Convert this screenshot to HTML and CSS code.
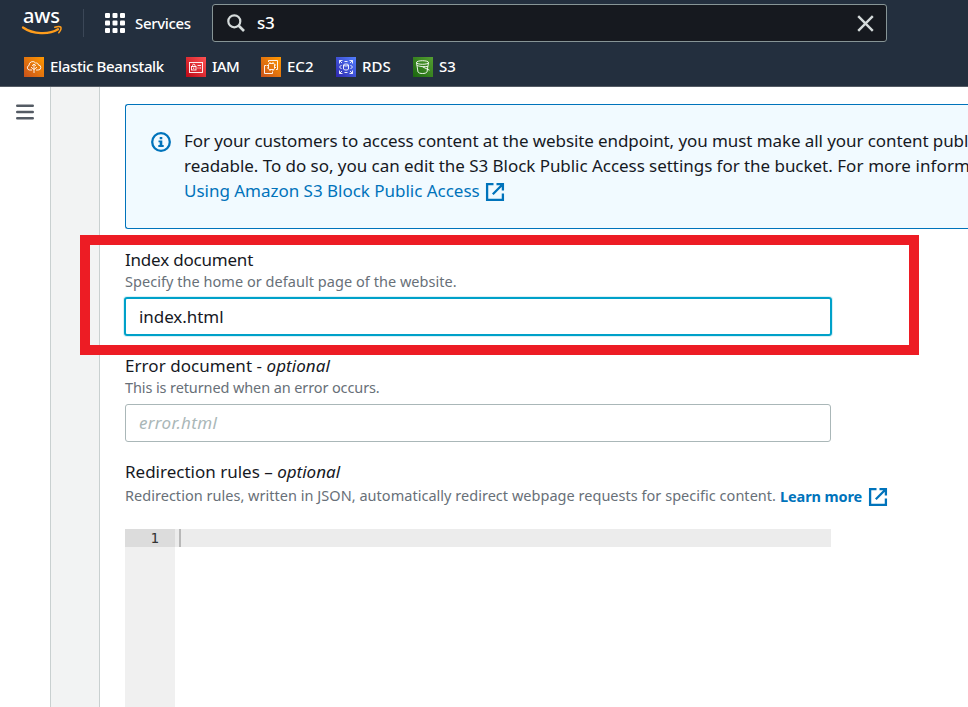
FILE: index.html
```html
<!DOCTYPE html>
<html lang="en">
<head>
<meta charset="utf-8">
<title>Edit static website hosting</title>
<link rel="stylesheet" href="styles.css">
</head>
<body>
<header class="nav">
  <div class="nav-top">
    <svg class="logo" width="40" height="28" viewBox="0 0 40 28">
      <text class="logo-text" x="1" y="14" textLength="37">aws</text>
      <path d="M1 18.500C11 25.500 27 26 36 20.300" fill="none" stroke="#ff9d1c" stroke-width="2.300" stroke-linecap="round"/>
      <path d="M32.800 18.200C35 17.500 38 17.300 38.800 18.100 39.300 19.100 38.300 22 36.800 23.800" fill="none" stroke="#ff9d1c" stroke-width="1.500" stroke-linecap="round"/>
    </svg>
    <span class="nav-divider"></span>
    <div class="services">
      <svg width="20" height="20" viewBox="0 0 20 20" fill="#fff"><rect width="5" height="5" rx="1"/><rect x="7.500" width="5" height="5" rx="1"/><rect x="15" width="5" height="5" rx="1"/><rect y="7.500" width="5" height="5" rx="1"/><rect x="7.500" y="7.500" width="5" height="5" rx="1"/><rect x="15" y="7.500" width="5" height="5" rx="1"/><rect y="15" width="5" height="5" rx="1"/><rect x="7.500" y="15" width="5" height="5" rx="1"/><rect x="15" y="15" width="5" height="5" rx="1"/></svg>
      <span class="services-label">Services</span>
    </div>
    <div class="search">
      <svg width="18" height="18" viewBox="0 0 18 18" fill="none" stroke="#d5dbdb" stroke-width="2.200"><circle cx="7.300" cy="7.300" r="6"/><path d="M11.500 11.500L17 17" stroke-width="2.600"/></svg>
      <span class="query">s3</span>
      <svg width="17" height="17" viewBox="0 0 17 17" fill="none" stroke="#d5dbdb" stroke-width="2.400"><path d="M1.200 1.200L15.800 15.800M15.800 1.200L1.200 15.800"/></svg>
    </div>
  </div>
  <div class="favorites">
    <a class="fav fav-eb"><svg width="20" height="20" viewBox="0 0 20 20"><defs><linearGradient id="o" x1="0" y1="1" x2="1" y2="0"><stop offset="0" stop-color="#c8511b"/><stop offset="1" stop-color="#ff9900"/></linearGradient></defs><rect width="20" height="20" fill="url(#o)"/><g fill="none" stroke="#fff" stroke-width="0.900"><path d="M8 13H5.500A2.300 2.300 0 0 1 5 8.500 3.700 3.700 0 0 1 11.700 6.100 2 2 0 0 1 14.400 8 2.500 2.500 0 0 1 14.200 13H12"/><path d="M10 7.500V16M7 10.200L10 12.500 13 10.200M8 8.800L10 7 12 8.800"/></g></svg><span>Elastic Beanstalk</span></a>
    <a class="fav fav-iam"><svg width="20" height="20" viewBox="0 0 20 20"><defs><linearGradient id="r" x1="0" y1="1" x2="1" y2="0"><stop offset="0" stop-color="#bd0816"/><stop offset="1" stop-color="#ff5252"/></linearGradient></defs><rect width="20" height="20" fill="url(#r)"/><g fill="none" stroke="#fff" stroke-width="0.900"><rect x="3.500" y="5.500" width="13" height="10"/><rect x="5.500" y="9.500" width="4.500" height="3.500"/><path d="M6.500 9.500V8.500A1.200 1.200 0 0 1 9 8.500V9.500M7.700 10.500V12M11.500 8.500H15M11.500 11H12.500M13.500 11H15"/></g></svg><span>IAM</span></a>
    <a class="fav fav-ec2"><svg width="20" height="20" viewBox="0 0 20 20"><rect width="20" height="20" fill="url(#o)"/><g fill="none" stroke="#fff" stroke-width="0.900"><rect x="7.500" y="6.500" width="6" height="6" rx="1"/><path d="M7.500 5V3.500H16.500V12.500H15M5.500 8.500H3.500V16.500H11.500V14.500"/><path d="M9 5V6.500M12 5V6.500M9 12.500V14M12 12.500V14M6 8.500H7.500M6 11H7.500M13.500 8H15M13.500 10.500H15"/></g></svg><span>EC2</span></a>
    <a class="fav fav-rds"><svg width="20" height="20" viewBox="0 0 20 20"><defs><linearGradient id="b" x1="0" y1="1" x2="1" y2="0"><stop offset="0" stop-color="#2e27ad"/><stop offset="1" stop-color="#527fff"/></linearGradient></defs><rect width="20" height="20" fill="url(#b)"/><g fill="none" stroke="#fff" stroke-width="0.900"><ellipse cx="10" cy="8" rx="2.500" ry="1"/><path d="M7.500 8V12C7.500 13.400 12.500 13.400 12.500 12V8"/><path d="M3.500 6.500V3.500H6.500M3.500 3.500L6 6M13.500 3.500H16.500V6.500M16.500 3.500L14 6M3.500 13.500V16.500H6.500M3.500 16.500L6 14M13.500 16.500H16.500V13.500M16.500 16.500L14 14M5.500 8L3.500 10 5.500 12M14.500 8L16.500 10 14.500 12M8.500 4.500H11.500M8.500 15.500H11.500"/></g></svg><span>RDS</span></a>
    <a class="fav fav-s3"><svg width="20" height="20" viewBox="0 0 20 20"><defs><linearGradient id="g" x1="0" y1="1" x2="1" y2="0"><stop offset="0" stop-color="#1b660f"/><stop offset="1" stop-color="#55a032"/></linearGradient></defs><rect width="20" height="20" fill="url(#g)"/><g fill="none" stroke="#fff" stroke-width="0.900"><ellipse cx="9.500" cy="5.500" rx="6" ry="1.800"/><path d="M3.500 5.500L5 15C6 17 13 17 14 15L15.500 5.500M3.800 8.200C6 9.500 9 9.700 14.800 9.500M9.500 9.800L16.500 13.200"/></g></svg><span>S3</span></a>
  </div>
</header>
<div class="page">
  <aside class="rail"><svg width="18" height="16" viewBox="0 0 18 16" stroke="#545b64" stroke-width="2.400" stroke-linecap="round"><path d="M1.200 1.800H16.800M1.200 8H16.800M1.200 14.200H16.800"/></svg></aside>
  <div class="gutter"></div>
  <main class="panel">
    <section class="alert">
      <svg class="info" width="20" height="20" viewBox="0 0 20 20"><circle cx="10" cy="10" r="8.800" fill="none" stroke="#0073bb" stroke-width="2.300"/><path d="M8.700 5H11.300V7.200H8.700ZM7.500 8.600H11.300V13H12.700V15H7.300V13H8.700V10.300H7.500Z" fill="#0073bb"/></svg>
      <div class="alert-text">
        <div><span class="endpoint">For your customers to access content at the website endpoint,</span><span class="public"> you must make all your content publicly</span></div>
        <div><span class="settings">readable. To do so, you can edit the S3 Block Public Access settings for the bucket.</span><span class="more-info"> For more information, see</span></div>
        <div class="link"><span class="doc-link">Using Amazon S3 Block Public Access</span><svg class="ext" width="18" height="18" viewBox="0 0 18 18" fill="none" stroke="#0073bb" stroke-width="2.300"><path d="M7.500 1.100H1.100V16.900H16.900V10.500M10.500 1.100H16.900V7.500M16.500 1.500L6.800 11.200"/></svg></div>
      </div>
    </section>
    <section class="field field-index">
      <label>Index document</label>
      <p class="hint">Specify the home or default page of the website.</p>
      <div class="input focused">index.html</div>
    </section>
    <section class="field field-error">
      <label>Error document - <i>optional</i></label>
      <p class="hint">This is returned when an error occurs.</p>
      <div class="input placeholder">error.html</div>
    </section>
    <section class="field field-rules">
      <label>Redirection rules – <i>optional</i></label>
      <p class="hint"><span>Redirection rules, written in JSON, automatically redirect webpage requests for specific content.</span><a class="learn"><span>Learn more</span><svg width="18" height="18" viewBox="0 0 18 18" fill="none" stroke="#0073bb" stroke-width="2.300"><path d="M7.500 1.100H1.100V16.900H16.900V10.500M10.500 1.100H16.900V7.500M16.500 1.500L6.800 11.200"/></svg></a></p>
    </section>
    <div class="editor">
      <div class="line-numbers"><span>1</span></div>
      <div class="code"><div class="code-line"></div></div>
    </div>
  </main>
</div>
<div class="highlight"></div>
</body>
</html>
```
FILE: styles.css
```css
* { box-sizing: border-box; }
body { margin: 0; height: 707px; overflow: hidden; background: #fff; color: #16191f; font-family: "Noto Sans", sans-serif; font-size: 17px; display: flex; flex-direction: column; position: relative; }
svg { display: block; flex: none; overflow: visible; }
span { white-space: pre; }
.nav { height: 87px; flex: none; background: #232f3e; border-bottom: 1px solid #545b64; color: #fff; }
.nav-top { height: 46px; display: flex; align-items: center; padding-left: 22px; }
.logo { margin-top: 0; }
.logo-text { font-family: "Noto Sans", sans-serif; font-size: 20px; font-weight: 500; fill: #fff; }
.nav-divider { width: 1px; height: 28px; margin-left: 21px; background: #3b4757; }
.services { display: flex; align-items: center; gap: 10px; margin-left: 21px; width: 107px; font-size: 15px; font-weight: 550; }
.services-label { letter-spacing: -0.35px; }
.search { width: 675px; height: 38px; border: 1px solid #879596; border-radius: 3px; background: #16191f; display: flex; align-items: center; padding: 0 12px 0 14px; font-weight: 500; }
.query { margin: -2px 0 0 12px; flex: 1; letter-spacing: -0.2px; }
.favorites { display: flex; height: 40px; align-items: center; padding-left: 24px; font-size: 15px; font-weight: 550; }
.fav { display: flex; align-items: center; gap: 6px; }
.fav svg { margin-top: 2px; }
.fav-eb { width: 162px; letter-spacing: -0.35px; }
.fav-iam, .fav-ec2 { width: 75px; }
.fav-iam { letter-spacing: -0.6px; }
.fav-rds { width: 77px; }
.page { flex: 1; display: flex; min-height: 0; }
.rail { width: 50px; padding: 17px 16px; }
.gutter { width: 50px; background: #f2f3f3; border: solid #c9d0d0; border-width: 0 1px; }
.panel { flex: 1; min-width: 0; padding: 17px 0 0 25px; }
.alert { height: 125px; border: 1px solid #0073bb; border-right: 0; border-radius: 3px 0 0 3px; background: #f1faff; padding: 23px 0 0 25px; display: flex; overflow: hidden; }
.info { margin: 4px 13px 0 0; }
.alert-text { line-height: 25px; white-space: nowrap; }
.endpoint { letter-spacing: -0.1px; }
.public { letter-spacing: -0.08px; }
.settings { letter-spacing: -0.045px; }
.more-info { letter-spacing: 0.1px; }
.doc-link { letter-spacing: -0.02px; }
.link { display: flex; align-items: center; color: #0073bb; }
.ext { margin: 3px 0 0 6px; }
label { display: block; height: 24px; line-height: 23px; }
.hint { margin: 0; height: 20px; line-height: 20px; font-size: 14.5px; color: #687078; display: flex; align-items: center; padding-bottom: 2px; }
.input { width: 706px; height: 38px; border: 1px solid #aab7b8; border-radius: 3px; padding: 0 0 2px 13px; display: flex; align-items: center; margin-top: 6px; }
.focused { width: 708px; height: 39px; margin: 5px 0 0 -1px; padding-bottom: 0; border: 2px solid #00a1c9; box-shadow: 0 0 0 1px #d9f1f7; letter-spacing: -0.06px; }
.placeholder { color: #aab7b8; font-style: italic; letter-spacing: 0.3px; }
.field-index { margin-top: 19px; height: 106px; }
.field-index label { letter-spacing: -0.2px; }
.field-index .hint { letter-spacing: 0.04px; }
.field-error { height: 106px; }
.field-error label { letter-spacing: 0.05px; }
.field-error .hint { letter-spacing: -0.11px; }
.field-rules { height: 69px; }
.field-rules .hint { margin-top: 2px; letter-spacing: 0.025px; }
.learn { display: flex; align-items: center; gap: 7px; margin: 1px 0 0 4px; color: #0073bb; font-weight: 700; letter-spacing: -0.1px; }
.learn svg { margin-top: 2px; }
.editor { display: flex; width: 706px; height: 180px; }
.line-numbers { width: 50px; background: #f0f0f0; font: 14px/18px "DejaVu Sans Mono", monospace; color: #333; text-align: right; }
.line-numbers span { display: block; height: 18px; padding-right: 16px; background: #dcdcdc; }
.code { flex: 1; }
.code-line { height: 18px; background: linear-gradient(90deg, #ececec 4px, #b8b8b8 4px, #b8b8b8 6px, #ececec 6px); }
.highlight { position: absolute; left: 80px; top: 235px; width: 839px; height: 120px; border: 10px solid #ed1c24; }
```
